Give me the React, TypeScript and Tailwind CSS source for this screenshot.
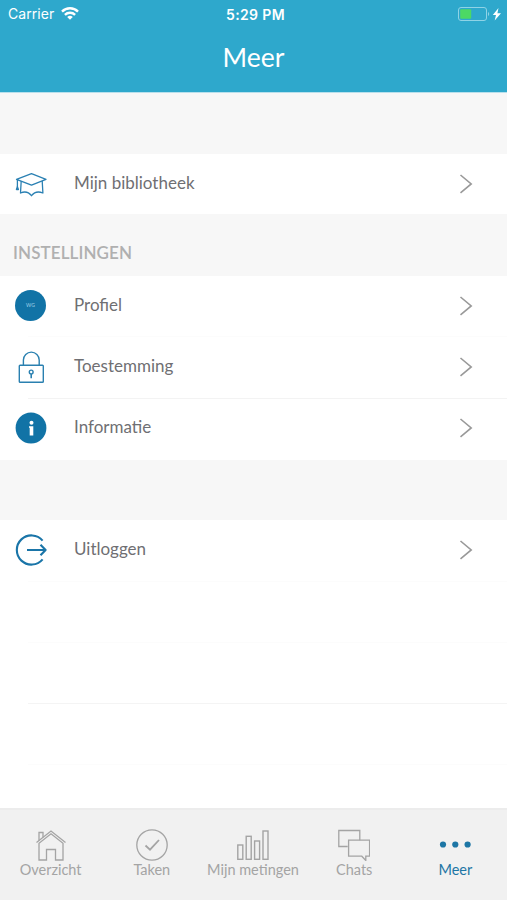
import React from 'react';
import clsx from 'clsx';

type IconName = 'library' | 'profile' | 'lock' | 'info' | 'logout';

interface MenuItem {
  label: string;
  icon: IconName;
}

const settings: MenuItem[] = [
  { label: 'Profiel', icon: 'profile' },
  { label: 'Toestemming', icon: 'lock' },
  { label: 'Informatie', icon: 'info' },
];

const tabs = [
  { label: 'Overzicht', icon: 'home' },
  { label: 'Taken', icon: 'tasks' },
  { label: 'Mijn metingen', icon: 'chart' },
  { label: 'Chats', icon: 'chats' },
  { label: 'Meer', icon: 'more' },
];

function StatusBar() {
  return (
    <div className="grid h-7 grid-cols-3 items-center pl-2 pr-1 font-['Inter',sans-serif] text-[14px]">
      <div className="flex items-center gap-[7px]">
        <span className="pb-px tracking-[0.05px]">Carrier</span>
        <svg className="mb-px h-[13px] w-[18px]" viewBox="0 0 18 13" fill="none" stroke="currentColor" strokeWidth="2.4">
          <path d="M1 4.6a11.4 11.4 0 0 1 16 0" />
          <path d="M3.9 7.9a7.3 7.3 0 0 1 10.2 0" />
          <path d="M9 12.8 6.2 10a4 4 0 0 1 5.600 0Z" fill="currentColor" stroke="none" />
        </svg>
      </div>
      <span className="text-center font-semibold tracking-[0.35px]">5:29 PM</span>
      <div className="flex items-center justify-end">
        <svg className="mb-px h-[14px] w-[45px]" viewBox="0 0 45 14">
          <rect x="0.5" y="0.5" width="28" height="13" rx="2.5" fill="none" stroke="#8fd3e6" />
          <rect x="2.2" y="2.2" width="11" height="9.6" rx="1" fill="#4cd964" />
          <path d="M30 5v4c1.6-.6 1.6-3.4 0-4Z" fill="#8fd3e6" />
          <path d="M40.5 1 34.800 8h3.200l-1.300 5.500L43 6.300h-3.600Z" fill="#fff" />
        </svg>
      </div>
    </div>
  );
}

function RowIcon({ name }: { name: IconName }) {
  switch (name) {
    case 'library':
      return (
        <svg className="size-8" viewBox="0 0 32 32" fill="none" stroke="#2a80b3" strokeWidth="1.3" strokeLinejoin="round">
          <path d="M1.5 11.3 16.500 5.600 31 11.300 16.500 17.200Z" />
          <path d="M6.200 13 5.500 25c4-1.800 8.300-.8 11 2.700 2.700-3.500 7-4.500 11.400-2.700L27.200 13" />
          <path d="M2.400 11.700v7.500" />
          <path d="M2.400 18.600 1.400 21.500h2Z" fill="#17658f" />
        </svg>
      );
    case 'profile':
      return (
        <span className="mb-px flex size-[31px] items-center justify-center rounded-full bg-[#1173a6] text-[5px] text-[#a5d3e8]">
          WG
        </span>
      );
    case 'lock':
      return (
        <svg className="size-8" viewBox="0 0 32 32" fill="none" stroke="#2a80b0" strokeWidth="1.4">
          <rect x="4.3" y="14.3" width="24" height="17" rx="0.8" />
          <path d="M8.400 14.300V9a7.900 7.900 0 0 1 15.800 0v5.300" />
          <circle cx="16.2" cy="21" r="1.9" />
          <path d="M16.200 23v4.200" strokeWidth="1.6" />
        </svg>
      );
    case 'info':
      return (
        <svg className="size-8" viewBox="0 0 32 32">
          <circle cx="16" cy="16" r="15.4" fill="#1173a6" />
          <circle cx="16.5" cy="10.8" r="2" fill="#fff" />
          <path d="M14 14.200h4.300v9.200h-3.600v-7.600H14Z" fill="#fff" />
        </svg>
      );
    case 'logout':
      return (
        <svg className="size-8" viewBox="0 0 32 32" fill="none" stroke="#1a75a8" strokeWidth="2.1">
          <path d="M27.600 6.600a14.600 14.600 0 1 0 0 18.800" />
          <path d="M12 16h18M25.500 10.700l5.100 5.300-5.100 5.300" strokeLinejoin="round" />
        </svg>
      );
  }
}

function Row({ label, icon }: MenuItem) {
  return (
    <div className="flex h-[61px] items-center pb-px pl-[14.5px] pr-[34px]">
      <div className="flex w-8 justify-center">
        <RowIcon name={icon} />
      </div>
      <span className="ml-[27.5px] flex-1 pb-[3px] text-[17px] leading-6 text-[#6f6f73]">{label}</span>
      <svg className="mb-px h-5 w-[14px]" viewBox="0 0 14 20" fill="none" stroke="#999" strokeWidth="1.6">
        <path d="m1.5 1 10.700 8.900-10.700 8.900" />
      </svg>
    </div>
  );
}

function TabIcon({ name }: { name: string }) {
  switch (name) {
    case 'home':
      return (
        <svg className="size-8" viewBox="0 0 32 32" fill="none" stroke="currentColor" strokeWidth="1.3">
          <path d="M1.500 13.600 16 2l14.500 11.600" />
          <path d="M4 14.200V31h7.500V20.500h9V31H28V14.200L16 4.800Z" />
          <path d="M4 11.600V3.500h4v4.800" />
        </svg>
      );
    case 'tasks':
      return (
        <svg className="size-8" viewBox="0 0 32 32" fill="none" stroke="currentColor" strokeWidth="1.3">
          <circle cx="16" cy="16" r="15.2" />
          <path d="m9.500 16.500 4.500 4.200 9-9.700" strokeWidth="1.8" />
        </svg>
      );
    case 'chart':
      return (
        <svg className="size-8" viewBox="0 0 32 32" fill="none" stroke="currentColor" strokeWidth="1.4">
          <rect x="0.8" y="16" width="5" height="14.3" />
          <rect x="9.2" y="7.3" width="5" height="23" />
          <rect x="17.6" y="12" width="5" height="18.3" />
          <rect x="26" y="2" width="5" height="28.3" />
        </svg>
      );
    case 'chats':
      return (
        <svg className="size-8" viewBox="0 0 32 32" fill="none" stroke="currentColor" strokeWidth="1.3">
          <path d="M9.700 17.500H.8V1.500h21v9.700" />
          <path d="M10.600 11.200h21v16h-3.800v4.300l-4-4.300H10.600Z" />
        </svg>
      );
    default:
      return (
        <svg className="size-8" viewBox="0 0 32 32" fill="currentColor">
          <circle cx="4" cy="15.5" r="3.1" />
          <circle cx="16.3" cy="15.5" r="3.1" />
          <circle cx="28.6" cy="15.5" r="3.1" />
        </svg>
      );
  }
}

function TabBar() {
  return (
    <nav className="grid h-[92px] shrink-0 grid-cols-5 border-t-2 border-[#ececec] bg-[#f1f1f1] pr-px pt-[19px]">
      {tabs.map((tab) => (
        <div
          key={tab.label}
          className={clsx(
            'flex flex-col items-center whitespace-nowrap text-[14.5px] leading-[18px]',
            tab.label === 'Meer' ? 'text-[#1d76a5]' : 'text-[#a4a4a4]'
          )}
        >
          <TabIcon name={tab.icon} />
          <span>{tab.label}</span>
        </div>
      ))}
    </nav>
  );
}

export default function App() {
  return (
    <div className="flex h-[900px] w-[507px] flex-col bg-white font-['Lato',sans-serif]">
      <header className="h-[93px] border-b border-[#b9e0ec] bg-[#2ea8cc] text-white">
        <StatusBar />
        <h1 className="pt-3 text-center text-[26.5px] leading-[34px]">Meer</h1>
      </header>

      <main className="flex-1">
        <div className="h-[61px] bg-[#f7f7f7]" />
        <Row label="Mijn bibliotheek" icon="library" />
        <h2 className="-mt-px h-[62px] bg-[#f7f7f7] pl-[13px] pt-[27px] text-[17px] font-semibold leading-6 tracking-[0.1px] text-[#b0b0b0]">
          INSTELLINGEN
        </h2>
        {settings.map((item, index) => (
          <React.Fragment key={item.label}>
            {index > 0 && (
              <div className={clsx('-mt-px ml-7 h-px', index === 1 ? 'bg-[#fcfcfc]' : 'translate-y-px bg-[#f3f3f3]')} />
            )}
            <Row {...item} />
          </React.Fragment>
        ))}
        <div className="mt-px h-[60px] bg-[#f7f7f7]" />
        <Row label="Uitloggen" icon="logout" />
        <div className="ml-7">
          <div className="h-[62px] border-y border-[#fcfcfc]" />
          <div className="h-[61px] border-b border-[#f4f4f4]" />
          <div className="h-[61px] border-b border-[#fcfcfc]" />
        </div>
      </main>

      <TabBar />
    </div>
  );
}
